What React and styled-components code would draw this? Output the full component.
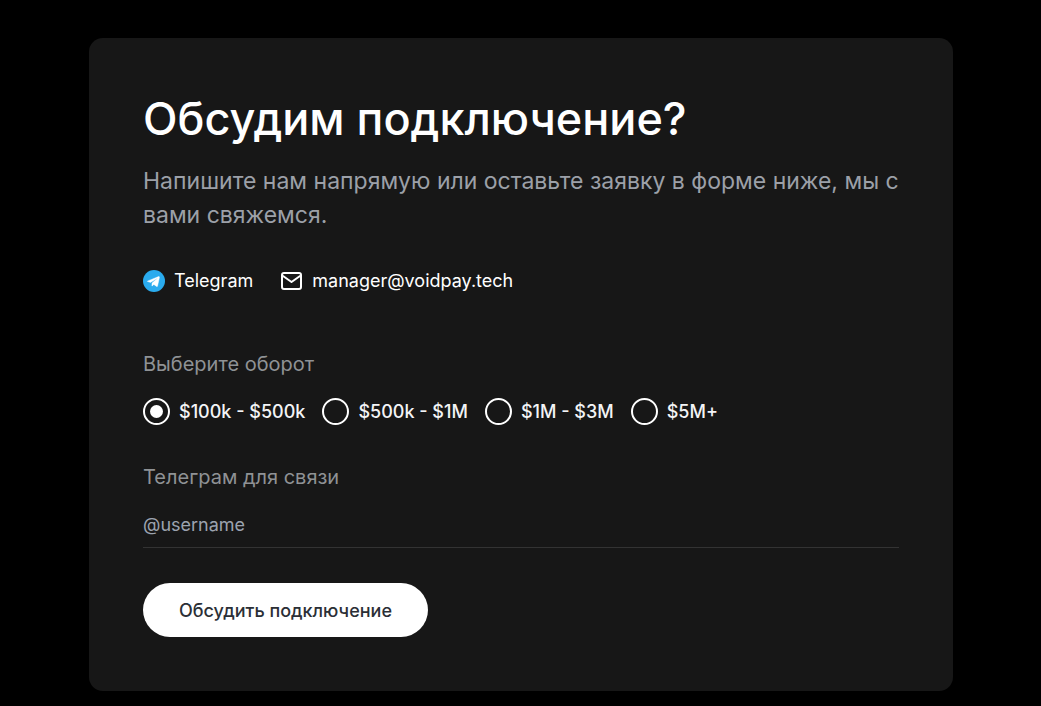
import React, { useState } from "react";
import styled, { createGlobalStyle } from "styled-components";

const GlobalStyle = createGlobalStyle`
  *, *::before, *::after { box-sizing: border-box; }
  body {
    margin: 0;
    background: #000;
    color: #fff;
    font-family: Inter, "Liberation Sans", sans-serif;
  }
`;

const Page = styled.main`
  display: flex;
  justify-content: center;
  padding: 38px 88px 15px 89px;
`;

const Card = styled.section`
  width: 100%;
  max-width: 1200px;
  padding: 54px;
  border-radius: 14px;
  background: #171717;
`;

const Title = styled.h1`
  margin: 0;
  font-size: 45px;
  line-height: 54px;
  font-weight: 500;
`;

const Lead = styled.p`
  margin: 18px 0 0;
  color: #9ca0a8;
  font-size: 23px;
  line-height: 34px;
  font-weight: 400;
`;

const Contacts = styled.address`
  display: flex;
  flex-wrap: wrap;
  gap: 28px;
  margin-top: 36px;
  font-style: normal;
`;

const ContactLink = styled.a`
  display: flex;
  align-items: center;
  gap: 9px;
  color: #fff;
  font-size: 18px;
  line-height: 26px;
  text-decoration: none;
`;

const Form = styled.form`
  margin-top: 55px;
`;

const Turnover = styled.fieldset`
  margin: 0;
  padding: 0;
  border: 0;
`;

const Legend = styled.legend`
  padding: 0;
  color: #8f9295;
  font-size: 20px;
  line-height: 30px;
`;

const Options = styled.div`
  display: flex;
  flex-wrap: wrap;
  gap: 17px;
  margin-top: 19px;
`;

const Option = styled.label`
  display: flex;
  align-items: center;
  gap: 9px;
  color: #f3f4f6;
  font-size: 18px;
  line-height: 27px;
  font-weight: 500;
`;

const Radio = styled.input`
  appearance: none;
  display: grid;
  place-items: center;
  width: 27px;
  height: 27px;
  margin: 0;
  border: 2px solid #fff;
  border-radius: 50%;

  &:checked::before {
    content: "";
    width: 13px;
    height: 13px;
    border-radius: 50%;
    background: #fff;
  }
`;

const FieldLabel = styled.label`
  display: block;
  margin-top: 37px;
  color: #8f9295;
  font-size: 20px;
  line-height: 30px;
`;

const TextField = styled.input`
  display: block;
  width: 100%;
  height: 46px;
  margin-top: 10px;
  padding: 0;
  border: 0;
  border-bottom: 1px solid #333;
  border-radius: 0;
  outline: none;
  background: transparent;
  color: #fff;
  font: 400 18px/27px Inter, "Liberation Sans", sans-serif;

  &::placeholder { color: #9ca3af; opacity: 1; }
`;

const SubmitButton = styled.button`
  height: 54px;
  margin-top: 35px;
  padding: 0 36px;
  border: 0;
  border-radius: 27px;
  background: #fff;
  color: #2b2f36;
  font: 500 18px/27px Inter, "Liberation Sans", sans-serif;
  cursor: pointer;
`;

const TelegramIcon = () => (
  <svg width="22" height="22" viewBox="0 0 24 24" aria-hidden="true">
    <circle cx="12" cy="12" r="12" fill="#2aabee" />
    <path d="M5.4 11.9 17 7.2c.6-.2 1.1.1.9 1l-2 9.2c-.1.7-.5.8-1.1.5l-3-2.2-1.5 1.4c-.2.2-.3.3-.6.3l.2-3.1 5.6-5c.2-.2 0-.3-.4-.1l-6.9 4.3-3-.9c-.6-.2-.6-.6.2-.7Z" fill="#fff" stroke="#fff" strokeWidth="0.5" />
  </svg>
);

const MailIcon = () => (
  <svg width="22" height="22" viewBox="0 0 22 22" fill="none" stroke="#fff" strokeWidth="2" strokeLinecap="round" strokeLinejoin="round" aria-hidden="true">
    <rect x="1" y="3" width="19" height="16" rx="2" />
    <path d="m2 6 8.5 6L19 6" />
  </svg>
);

const ranges = ["$100k - $500k", "$500k - $1M", "$1M - $3M", "$5M+"];

export default function App() {
  const [range, setRange] = useState(ranges[0]);
  return (
    <>
      <GlobalStyle />
      <Page>
        <Card>
          <Title>Обсудим подключение?</Title>
          <Lead>Напишите нам напрямую или оставьте заявку в форме ниже, мы с вами свяжемся.</Lead>
          <Contacts>
            <ContactLink href="#telegram"><TelegramIcon />Telegram</ContactLink>
            <ContactLink href="mailto:manager@voidpay.tech"><MailIcon />manager@voidpay.tech</ContactLink>
          </Contacts>
          <Form onSubmit={(e) => e.preventDefault()}>
            <Turnover>
              <Legend>Выберите оборот</Legend>
              <Options>
                {ranges.map((r) => (
                  <Option key={r}>
                    <Radio type="radio" name="turnover" value={r} checked={range === r} onChange={() => setRange(r)} />
                    {r}
                  </Option>
                ))}
              </Options>
            </Turnover>
            <FieldLabel htmlFor="username">Телеграм для связи</FieldLabel>
            <TextField id="username" name="username" placeholder="@username" />
            <SubmitButton type="submit">Обсудить подключение</SubmitButton>
          </Form>
        </Card>
      </Page>
    </>
  );
}
